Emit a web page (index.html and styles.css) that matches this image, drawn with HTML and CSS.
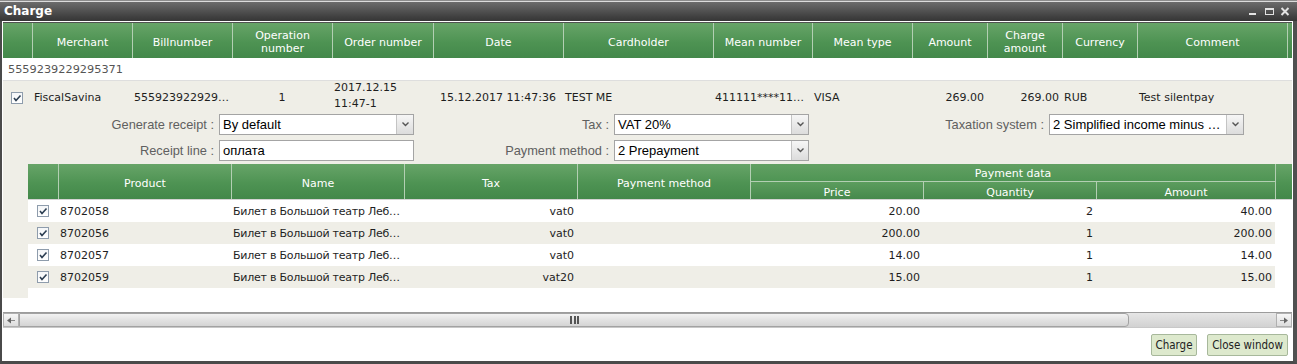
FILE: index.html
```html
<!DOCTYPE html>
<html>
<head>
<meta charset="utf-8">
<link rel="stylesheet" href="styles.css">
</head>
<body>
<div class="window">
  <div class="titlebar">
    <span class="title">Charge</span>
    <svg class="wctl" width="42" height="9" viewBox="0 0 42 9">
      <rect x="0" y="6" width="7" height="2" fill="#e2e2e2"/>
      <rect x="16.5" y="1.5" width="8" height="6" fill="none" stroke="#e2e2e2"/>
      <rect x="16" y="1" width="9" height="2" fill="#e2e2e2"/>
      <path d="M32.5 1 L39.5 8 M39.5 1 L32.5 8" stroke="#e2e2e2" stroke-width="2"/>
    </svg>
  </div>
  <div class="frame">
    <div class="ghead cols">
      <div></div>
      <div>Merchant</div>
      <div>Billnumber</div>
      <div>Operation<br>number</div>
      <div>Order number</div>
      <div>Date</div>
      <div>Cardholder</div>
      <div>Mean number</div>
      <div>Mean type</div>
      <div>Amount</div>
      <div>Charge<br>amount</div>
      <div>Currency</div>
      <div>Comment</div>
      <div></div>
    </div>
    <div class="group">5559239229295371</div>
    <div class="detail">
      <div class="mainrow cols">
        <div class="cbcell"><span class="cb"><svg width="12" height="12" viewBox="0 0 12 12"><path d="M3 6 L5 8.5 L9.5 3.5" fill="none" stroke="#2c3e52" stroke-width="1.6"/></svg></span></div>
        <div>FiscalSavina</div>
        <div>555923922929…</div>
        <div class="c">1</div>
        <div class="two">2017.12.15<br>11:47-1</div>
        <div class="c">15.12.2017 11:47:36</div>
        <div>TEST ME</div>
        <div>411111****11…</div>
        <div>VISA</div>
        <div class="r">269.00</div>
        <div class="r">269.00</div>
        <div>RUB</div>
        <div>Test silentpay</div>
        <div></div>
      </div>
      <div class="form">
        <label>Generate receipt :</label>
        <div class="select"><span class="val">By default</span><span class="dd"><svg width="7" height="5" viewBox="0 0 7 5"><path d="M0.5 0.5 L3.5 3.5 L6.5 0.5" fill="none" stroke="#555" stroke-width="1.4"/></svg></span></div>
        <label>Tax :</label>
        <div class="select"><span class="val">VAT 20%</span><span class="dd"><svg width="7" height="5" viewBox="0 0 7 5"><path d="M0.5 0.5 L3.5 3.5 L6.5 0.5" fill="none" stroke="#555" stroke-width="1.4"/></svg></span></div>
        <label>Taxation system :</label>
        <div class="select"><span class="val">2 Simplified income minus …</span><span class="dd"><svg width="7" height="5" viewBox="0 0 7 5"><path d="M0.5 0.5 L3.5 3.5 L6.5 0.5" fill="none" stroke="#555" stroke-width="1.4"/></svg></span></div>
        <label>Receipt line :</label>
        <div class="select input"><span class="val">оплата</span></div>
        <label>Payment method :</label>
        <div class="select"><span class="val">2 Prepayment</span><span class="dd"><svg width="7" height="5" viewBox="0 0 7 5"><path d="M0.5 0.5 L3.5 3.5 L6.5 0.5" fill="none" stroke="#555" stroke-width="1.4"/></svg></span></div>
        <span></span><span></span>
      </div>
      <div class="inner">
        <div class="ihead">
          <div class="h2 first"></div>
          <div class="h2">Product</div>
          <div class="h2">Name</div>
          <div class="h2">Tax</div>
          <div class="h2">Payment method</div>
          <div class="pdata">Payment data</div>
          <div class="h2 last"></div>
          <div class="sub">Price</div>
          <div class="sub">Quantity</div>
          <div class="sub">Amount</div>
        </div>
        <div class="irow">
          <div class="icb"><span class="cb"><svg width="12" height="12" viewBox="0 0 12 12"><path d="M3 6 L5 8.5 L9.5 3.5" fill="none" stroke="#2c3e52" stroke-width="1.6"/></svg></span></div>
          <div>8702058</div><div class="nm">Билет в Большой театр Леб…</div><div class="r">vat0</div><div></div>
          <div class="r">20.00</div><div class="r">2</div><div class="r">40.00</div>
        </div>
        <div class="irow alt">
          <div class="icb"><span class="cb"><svg width="12" height="12" viewBox="0 0 12 12"><path d="M3 6 L5 8.5 L9.5 3.5" fill="none" stroke="#2c3e52" stroke-width="1.6"/></svg></span></div>
          <div>8702056</div><div class="nm">Билет в Большой театр Леб…</div><div class="r">vat0</div><div></div>
          <div class="r">200.00</div><div class="r">1</div><div class="r">200.00</div>
        </div>
        <div class="irow">
          <div class="icb"><span class="cb"><svg width="12" height="12" viewBox="0 0 12 12"><path d="M3 6 L5 8.5 L9.5 3.5" fill="none" stroke="#2c3e52" stroke-width="1.6"/></svg></span></div>
          <div>8702057</div><div class="nm">Билет в Большой театр Леб…</div><div class="r">vat0</div><div></div>
          <div class="r">14.00</div><div class="r">1</div><div class="r">14.00</div>
        </div>
        <div class="irow alt">
          <div class="icb"><span class="cb"><svg width="12" height="12" viewBox="0 0 12 12"><path d="M3 6 L5 8.5 L9.5 3.5" fill="none" stroke="#2c3e52" stroke-width="1.6"/></svg></span></div>
          <div>8702059</div><div class="nm">Билет в Большой театр Леб…</div><div class="r">vat20</div><div></div>
          <div class="r">15.00</div><div class="r">1</div><div class="r">15.00</div>
        </div>
      </div>
    </div>
    <div class="hscroll">
      <div class="sbtn"><svg width="8" height="7" viewBox="0 0 8 7"><path d="M0 3.5 L4 0.5 L4 6.5 Z" fill="#666"/><rect x="4" y="3" width="4" height="1" fill="#888"/></svg></div>
      <div class="thumb"><span class="grip"></span></div>
      <div class="track"></div>
      <div class="sbtn"><svg width="8" height="7" viewBox="0 0 8 7"><path d="M8 3.5 L4 0.5 L4 6.5 Z" fill="#666"/><rect x="0" y="3" width="4" height="1" fill="#888"/></svg></div>
    </div>
    <div class="actions">
      <button class="btn b1">Charge</button>
      <button class="btn b2">Close window</button>
    </div>
  </div>
</div>
</body>
</html>
```
FILE: styles.css
```css
html, body {
  margin: 0;
  padding: 0;
  background: #fff;
}
body {
  font-family: "DejaVu Sans", Verdana, sans-serif;
  font-size: 11px;
  color: #1e1e1e;
}
.window {
  width: 1297px;
  height: 364px;
  display: flex;
  flex-direction: column;
  background: #fff;
}
.titlebar {
  height: 21px;
  flex: none;
  box-sizing: border-box;
  padding: 0 6px 0 4px;
  display: flex;
  align-items: center;
  justify-content: space-between;
  color: #fff;
  background: linear-gradient(to bottom, #8c8c8c 0, #8c8c8c 1px, #dcdcdc 1px, #dcdcdc 2px, #6c6c6c 2px, #565656 45%, #404040 80%, #363636 100%);
}
.title {
  font-weight: bold;
  font-size: 12px;
  line-height: 14px;
  padding-top: 1px;
}
.wctl { display: block; margin-top: 2px; }
.frame {
  flex: 1;
  border-left: 2px solid #4a4a4a;
  border-right: 4px solid #505050;
  border-bottom: 3px solid #4a4a4a;
  padding: 1px 1px 0 1px;
  display: flex;
  flex-direction: column;
  background: #fff;
}
.cols {
  display: grid;
  grid-template-columns: 29px 100px 100px 100px 101px 130px 150px 99px 100px 75px 75px 75px 150px 1fr;
}
.ghead {
  height: 35px;
  border-top: 1px solid #505050;
  background: linear-gradient(to bottom, #67a468, #4e9353 55%, #43884a);
  color: #fff;
}
.ghead > div {
  display: flex;
  align-items: center;
  justify-content: center;
  text-align: center;
  line-height: 13px;
  padding-top: 3px;
  border-left: 1px solid #b3cfb3;
}
.ghead > div:first-child { border-left: none; }
.group {
  height: 22px;
  line-height: 23px;
  padding-left: 5px;
  color: #555;
  font-size: 11.3px;
  border-bottom: 1px solid #dedede;
}
.detail {
  height: 217px;
  background: #efeee7;
}
.mainrow {
  height: 33px;
  align-items: center;
}
.mainrow > div {
  padding-left: 2px;
  white-space: nowrap;
  overflow: hidden;
}
.mainrow .c { text-align: center; padding-left: 0; }
.mainrow .r { text-align: right; padding-right: 3px; }
.mainrow .two { line-height: 16px; margin-top: -4px; }
.mainrow .cbcell { padding-left: 8px; display: flex; }
.cb {
  display: inline-block;
  width: 12px;
  height: 12px;
  box-sizing: border-box;
  border: 1px solid #8e9cac;
  background: linear-gradient(#f4f6f8, #fff);
  position: relative;
}
.cb svg { position: absolute; left: -1px; top: -1px; }
.form {
  display: grid;
  grid-template-columns: 216px 195px 200px 195px 240px 195px;
  grid-template-rows: 21px 21px;
  row-gap: 5px;
  font-family: "Liberation Sans", Arial, sans-serif;
}
.form label {
  text-align: right;
  padding-right: 5px;
  font-size: 12.8px;
  line-height: 21px;
  color: #606060;
}
.select {
  display: flex;
  box-sizing: border-box;
  border: 1px solid #a4a4a4;
  background: #fff;
  font-size: 13px;
  color: #000;
}
.select .val {
  flex: 1;
  padding-left: 3px;
  line-height: 19px;
  white-space: nowrap;
  overflow: hidden;
}
.select .dd {
  width: 16px;
  border-left: 1px solid #c4c4c4;
  background: linear-gradient(#f6f6f6, #dcdcdc);
  display: flex;
  align-items: center;
  justify-content: center;
}
.inner {
  margin: 3px 0 0 25px;
  height: 134px;
  background: #fff;
}
.ihead {
  display: grid;
  grid-template-columns: 30px 173px 173px 173px 173px 173px 173px 179px 1fr;
  grid-template-rows: 17px 18px;
  border-bottom: 1px solid #d4d4d4;
  color: #fff;
}
.ihead > div {
  display: flex;
  align-items: center;
  justify-content: center;
  border-left: 1px solid #b3cfb3;
}
.ihead .h2 {
  grid-row: 1 / span 2;
  padding-top: 3px;
  background: linear-gradient(to bottom, #67a468, #4e9353 55%, #43884a);
}
.ihead .first { border-left: none; grid-column: 1; }
.ihead .pdata {
  grid-column: 6 / span 3;
  grid-row: 1;
  padding-top: 2px;
  background: linear-gradient(to bottom, #62a063, #4f9554);
}
.ihead .last { grid-column: 9; }
.ihead .sub {
  grid-row: 2;
  padding-top: 3px;
  border-top: 1px solid #b3cfb3;
  background: linear-gradient(to bottom, #5c9d5e, #46894c);
}
.irow {
  display: grid;
  grid-template-columns: 30px 173px 173px 173px 173px 173px 173px 179px;
  width: 1247px;
  height: 22px;
  align-items: center;
  background: #fff;
}
.irow.alt { background: #efeee7; }
.irow > div {
  padding-left: 2px;
  white-space: nowrap;
  overflow: hidden;
}
.irow .nm { letter-spacing: -0.25px; }
.irow .r { text-align: right; padding-right: 3px; padding-left: 0; }
.irow .icb { padding-left: 9px; display: flex; }
.hscroll {
  margin-top: 14px;
  height: 16px;
  display: flex;
  box-sizing: border-box;
  border-top: 1px solid #9c9c9c;
  border-bottom: 1px solid #c8c8c8;
  background: linear-gradient(#e6e6e6, #d2d2d2);
}
.sbtn {
  width: 16px;
  box-sizing: border-box;
  border: 1px solid #b0b0b0;
  background: linear-gradient(#f7f7f7, #dcdcdc);
  display: flex;
  align-items: center;
  justify-content: center;
}
.thumb {
  width: 1110px;
  box-sizing: border-box;
  border: 1px solid #a2a2a2;
  border-radius: 0 4px 4px 0;
  background: linear-gradient(#f2f2f2, #e2e2e2 50%, #d4d4d4);
  display: flex;
  align-items: center;
  justify-content: center;
}
.grip {
  width: 9px;
  height: 8px;
  background: repeating-linear-gradient(to right, #555 0, #555 2px, transparent 2px, transparent 3.5px);
}
.track { flex: 1; }
.actions {
  display: flex;
  justify-content: flex-end;
  gap: 10px;
  padding: 6px 4px 0 0;
}
.btn {
  height: 22px;
  box-sizing: border-box;
  margin: 0;
  padding: 0;
  border: 1px solid #a7b89b;
  border-radius: 2px;
  background: #dde9cd;
  font-family: "DejaVu Sans", Verdana, sans-serif;
  font-stretch: condensed;
  font-size: 11.5px;
  color: #222;
  text-align: center;
}
.b1 { width: 46px; }
.b2 { width: 81px; }
```
